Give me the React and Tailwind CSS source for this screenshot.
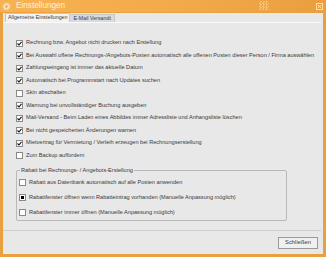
import React from "react";

const checks = [
  [true, "Rechnung bzw. Angebot nicht drucken nach  Erstellung"],
  [true, "Bei Auswahl offene Rechnungs-/Angebots-Posten automatisch alle offenen Posten dieser Person / Firma auswählen"],
  [true, "Zahlungseingang ist immer das aktuelle Datum"],
  [true, "Automatisch bei Programmstart nach Updates suchen"],
  [false, "Skin abschalten"],
  [true, "Warnung bei unvollständiger Buchung ausgeben"],
  [true, "Mail-Versand - Beim Laden eines Abbildes immer Adressliste und Anhangsliste löschen"],
  [true, "Bei nicht gespeicherten Änderungen warnen"],
  [true, "Mietvertrag für Vermietung / Verleih erzeugen bei Rechnungserstellung"],
  [false, "Zum Backup auffordern"],
];

const radios = [
  [false, "Rabatt aus Datenbank automatisch auf alle Posten anwenden"],
  [true, "Rabattfenster öffnen wenn Rabatteintrag vorhanden (Manuelle Anpassung möglich)"],
  [false, "Rabattfenster immer öffnen (Manuelle Anpassung möglich)"],
];

function Box({ checked }) {
  return (
    <div className="w-[7px] h-[7px] border border-[#8a8a8a] bg-white flex items-center justify-center shrink-0">
      {checked && (
        <svg width="5" height="5" viewBox="0 0 5 5">
          <path d="M0.5 2.5 L2 4 L4.5 0.8" stroke="#111" strokeWidth="1.1" fill="none" />
        </svg>
      )}
    </div>
  );
}

function RBox({ checked }) {
  return (
    <div className="w-[7px] h-[7px] border border-[#8a8a8a] bg-white flex items-center justify-center shrink-0">
      {checked && <div className="w-[3px] h-[3px] bg-black" />}
    </div>
  );
}

export default function App() {
  return (
    <div
      className="w-[326px] h-[257px] flex flex-col bg-[#e9a03e] text-[#3a3a3a]"
      style={{ fontFamily: '"Liberation Sans", Arial, sans-serif' }}
    >
      {/* title bar */}
      <div className="h-[12px] flex items-center pl-[2px] pr-[3px] bg-gradient-to-r from-[#f7b252] via-[#f4ab4a] to-[#e99f3e] relative">
        <svg width="9" height="9" viewBox="0 0 9 9" className="shrink-0">
          <circle cx="4.5" cy="4.5" r="3.2" fill="#fbe3b8" stroke="#f2d3a0" strokeWidth="1.6" strokeDasharray="1.2 0.8" />
          <circle cx="4.5" cy="4.5" r="1.2" fill="#e9a748" />
        </svg>
        <span className="ml-[5px] text-[8.2px] leading-none text-[#fff1d8]">Einstellungen</span>
        <div className="flex-1" />
        <div className="absolute left-[259px] top-[1px] w-[10px] h-[9px] opacity-60"
          style={{ backgroundImage: "repeating-conic-gradient(#fbd59a 0 25%, transparent 0 50%)", backgroundSize: "3px 3px" }} />
        <div className="w-[7px] h-[7px] border border-[#fbe0b0] flex items-center justify-center">
          <svg width="5" height="5" viewBox="0 0 5 5">
            <path d="M1 1 L4 4 M4 1 L1 4" stroke="#fff3dc" strokeWidth="0.9" />
          </svg>
        </div>
      </div>

      {/* body */}
      <div className="flex-1 mx-[3px] mb-[3px] mt-[1px] bg-[#e8e8e8] flex flex-col">
        {/* tabs */}
        <div className="h-[9px] flex items-end pl-[2px] text-[5.3px] leading-none">
          <div className="h-[9px] px-[2px] bg-[#f2f2f2] border border-b-0 border-[#c8c8c8] flex items-center">
            Allgemeine Einstellungen
          </div>
          <div className="h-[8px] px-[3px] bg-[#d6dae2] border-t border-r border-[#c8c8c8] flex items-center">
            E-Mail Versandt
          </div>
        </div>
        {/* panel */}
        <div className="h-[209px] border-t border-[#fafafa] border-b border-b-[#d0d0d0] mr-[2px] flex flex-col pt-[14px] pl-[13px] text-[5.6px] leading-none">
          {checks.map(([c, t], i) => (
            <div key={i} className="h-[12.5px] flex items-center gap-[3px]">
              <Box checked={c} />
              <span className="whitespace-nowrap">{t}</span>
            </div>
          ))}
          <div className="relative mt-[8px] w-[271px] h-[51px] border border-[#b8b8b8] rounded-[2px] flex flex-col pt-[4px] pl-[2px]">
            <span className="absolute -top-[3px] left-[3px] bg-[#e8e8e8] px-[1px]">
              Rabatt bei Rechnungs- / Angebots-Erstellung
            </span>
            {radios.map(([c, t], i) => (
              <div key={i} className="h-[15.5px] flex items-center gap-[3px]">
                <RBox checked={c} />
                <span className="whitespace-nowrap">{t}</span>
              </div>
            ))}
          </div>
        </div>
        {/* footer */}
        <div className="flex-1 flex items-center justify-end pr-[5px]">
          <div className="w-[40px] h-[12px] border border-[#9a9a9a] bg-[#f0f0f0] flex items-center justify-center text-[5.8px] leading-none">
            Schließen
          </div>
        </div>
      </div>
    </div>
  );
}
